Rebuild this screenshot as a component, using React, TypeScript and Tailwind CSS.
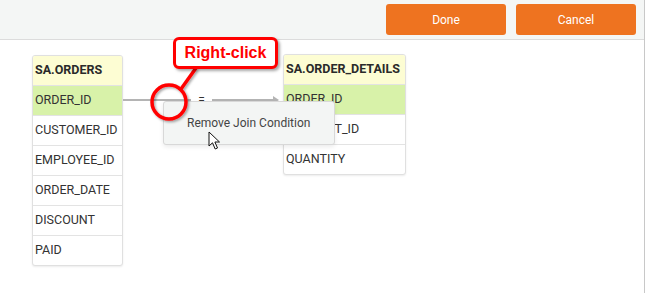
import React from "react";

const leftRows = ["CUSTOMER_ID", "EMPLOYEE_ID", "ORDER_DATE", "DISCOUNT", "PAID"];
const rightRows = ["PRODUCT_ID", "QUANTITY"];

function Table({ title, rows, width }: { title: string; rows: string[]; width: string }) {
  return (
    <div className={`${width} rounded-[3px] border border-[#e0e0e0] bg-white shadow-[0_1px_2px_rgba(0,0,0,0.08)] overflow-hidden`}>
      <div className="h-[29px] flex items-center pl-[2px] bg-[#fdfdd3] font-bold text-[12.5px] text-[#2a2a2a]">{title}</div>
      <div className="h-[30px] flex items-center pl-[2px] bg-[#d8f2a9] border-t border-[#e3e3e3] text-[12.5px] text-[#333]">ORDER_ID</div>
      {rows.map((r) => (
        <div key={r} className="h-[30px] flex items-center pl-[2px] border-t border-[#e3e3e3] text-[12.5px] text-[#333]">
          {r}
        </div>
      ))}
    </div>
  );
}

export default function App() {
  return (
    <div className="relative w-[645px] h-[293px] bg-white border-r border-[#c8c8c8] font-['Roboto',sans-serif] overflow-hidden">
      <div className="h-[40px] bg-[#f4f6f5] border-b border-[#dcdcdc] flex justify-end items-start pt-[4px] pr-[8px] gap-[10px]">
        <button className="w-[120px] h-[31px] rounded-[3px] bg-[#ee7320] text-white text-[12px]">Done</button>
        <button className="w-[120px] h-[31px] rounded-[3px] bg-[#ee7320] text-white text-[12px]">Cancel</button>
      </div>

      <div className="flex items-start pl-[32px] pt-[15px]">
        <Table title="SA.ORDERS" rows={leftRows} width="w-[91px]" />
        <div className="w-[160px] h-[30px] mt-[30px] flex items-center">
          <div className="w-[68px] h-[2px] bg-[#b4b4b4]" />
          <div className="w-[21px] text-center text-[12px] text-[#333] leading-none">=</div>
          <div className="flex-1 flex items-center pr-[4px]">
            <div className="flex-1 h-[2px] bg-[#b4b4b4]" />
            <svg width="6" height="8" viewBox="0 0 6 8"><path d="M0 0 L6 4 L0 8 Z" fill="#b4b4b4" /></svg>
          </div>
        </div>
        <div className="-mt-[1px]">
          <Table title="SA.ORDER_DETAILS" rows={rightRows} width="w-[123px]" />
        </div>
      </div>

      {/* context menu */}
      <div className="absolute left-[163px] top-[101px] w-[172px] h-[44px] rounded-[3px] border border-[#d8d8d8] bg-[#f3f5f4] shadow-[0_2px_4px_rgba(0,0,0,0.08)] flex items-center pl-[23px] text-[12px] text-[#444]">
        Remove Join Condition
      </div>

      {/* cursor */}
      <svg className="absolute left-[208px] top-[131px]" width="14" height="20" viewBox="0 0 14 20">
        <path d="M1 1 L1 15 L4.5 11.8 L7.2 18 L9.5 17 L6.9 11 L11.5 11 Z" fill="white" stroke="#111" strokeWidth="1" strokeLinejoin="round" />
      </svg>

      {/* circle annotation */}
      <svg className="absolute left-0 top-0" width="645" height="293" viewBox="0 0 645 293" style={{ pointerEvents: "none" }}>
        <defs>
          <filter id="sh" x="-20%" y="-20%" width="140%" height="140%">
            <feDropShadow dx="1.5" dy="1.5" stdDeviation="1.2" floodColor="#000" floodOpacity="0.35" />
          </filter>
        </defs>
        <g filter="url(#sh)">
          <circle cx="169" cy="102" r="17" fill="none" stroke="#ff0000" strokeWidth="3.5" />
          <line x1="181" y1="89" x2="196" y2="68" stroke="#ff0000" strokeWidth="3.5" />
        </g>
      </svg>

      {/* callout */}
      <div className="absolute left-[173px] top-[37px] w-[105px] h-[32px] rounded-[6px] border-[3px] border-[#ff0000] bg-white shadow-[2px_2px_3px_rgba(0,0,0,0.35)] flex items-center justify-center font-['Liberation_Sans',sans-serif] font-bold text-[16px] text-[#ff0000]">
        Right-click
      </div>
    </div>
  );
}
